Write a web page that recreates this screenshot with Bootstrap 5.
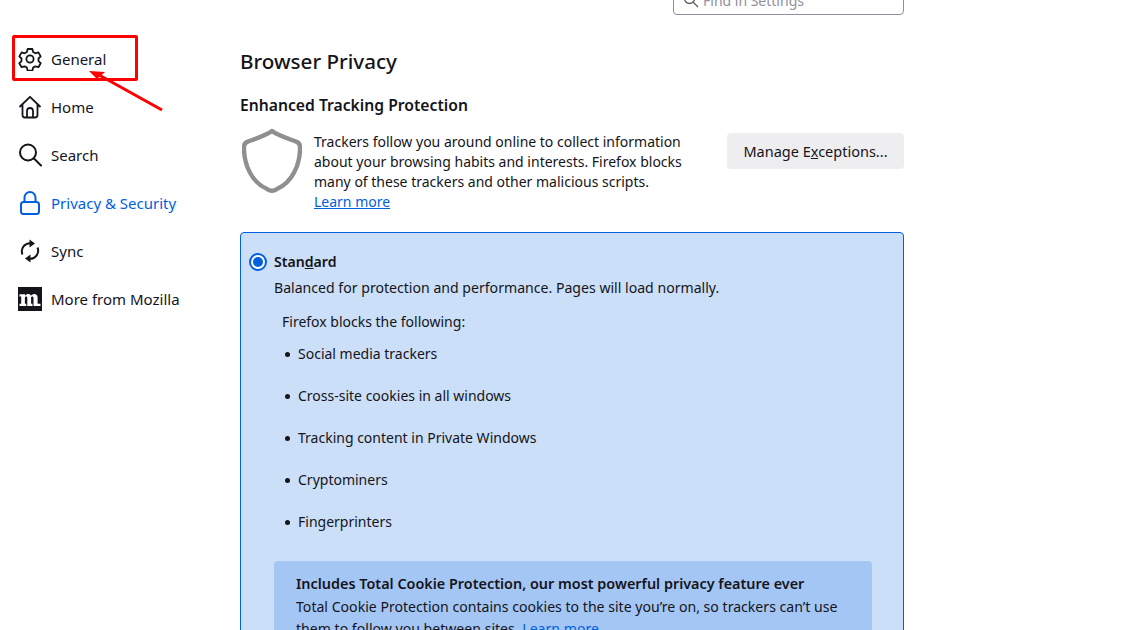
<!DOCTYPE html>
<html lang="en">
<head>
    <meta charset="UTF-8">
    <meta name="viewport" content="width=device-width, initial-scale=1.0">
    <title>Settings</title>
    <link href="https://cdn.jsdelivr.net/npm/bootstrap@5.3.0/dist/css/bootstrap.min.css" rel="stylesheet">
    <style>
        html, body { height: 630px; overflow: hidden; }
        body { font-family: "Noto Sans", "Open Sans", sans-serif; font-size: 14.1px; color: #15141a; background: #fff; position: relative; }
        a { color: #0060df; }
        .page-wrap { height: 630px; }
        .side-col { width: 240px; padding: 35px 0 0 18px; flex: none; }
        .side-item { height: 48px; gap: 9px; font-size: 15px; color: #15141a; }
        .side-item svg { width: 24px; height: 24px; flex: none; }
        .side-item.is-active { color: #0060df; }
        .main-col { width: 664px; flex: none; }
        .find-box { height: 30px; margin-top: -15px; margin-left: 433px; width: 231px; border: 1px solid #8f8f9d; border-radius: 4px; color: #8f8f9d; padding: 0 9px; gap: 4px; font-size: 14px; }
        .page-title { font-size: 20.6px; font-weight: 500; line-height: 30px; margin: 31px 0 0; }
        .sub-title { font-size: 15.7px; font-weight: 600; line-height: 22px; margin: 18px 0 0; }
        .intro-row { margin-top: 16px; height: 88px; }
        .shield-slot { width: 74px; flex: none; padding-left: 2px; margin-top: -4px; }
        .intro-text { width: 400px; line-height: 20px; font-size: 14px; flex: none; }
        .manage-btn { margin: 1px 0 0 auto; width: 177px; height: 36px; background: #eeeef0; border: 0; border-radius: 4px; font-size: 14.5px; color: #15141a; padding: 2px 0 0; }
        .std-card { margin-top: 12px; height: 500px; background: #cbdff8; border: 1px solid #0060df; border-radius: 4px; padding: 18px 31px 0 8px; }
        .radio-dot { width: 18px; height: 18px; border-radius: 50%; background: #fff; border: 2px solid #0060df; flex: none; padding: 2px; }
        .radio-dot span { display: block; width: 10px; height: 10px; border-radius: 50%; background: #0060df; }
        .std-label { font-weight: 600; line-height: 22px; margin-left: -1px; }
        .std-desc { margin: 5px 0 0 25px; line-height: 20px; }
        .blocks-title { margin: 14px 0 0 33px; line-height: 20px; font-size: 14px; }
        .block-list { margin: 11px 0 0 33px; padding: 0; list-style: none; font-size: 14px; }
        .block-list li { height: 42px; line-height: 22px; padding-left: 16px; position: relative; }
        .block-list li::before { content: ""; position: absolute; left: 3px; top: 9px; width: 5px; height: 5px; border-radius: 50%; background: #15141a; }
        .tcp-box { margin: 8px 0 0 25px; background: #a4c6f4; border-radius: 4px; padding: 12px 22px; line-height: 22px; height: 120px; }
        .tcp-box p { margin: 0; }
        .tcp-head { font-weight: 600; font-size: 14.4px; margin-bottom: 1px !important; }
        .note-box { position: absolute; left: 12px; top: 35px; width: 126px; height: 46px; border: 3px solid #f00; border-radius: 2px; }
        .note-arrow { position: absolute; left: 85px; top: 66px; width: 85px; height: 50px; }
    </style>
</head>
<body>
    <div class="page-wrap d-flex">
        <nav class="side-col">
            <div class="side-item d-flex align-items-center">
                <svg viewBox="0 0 24 24" fill="none" stroke="#15141a" stroke-width="1.8" stroke-linejoin="round"><path d="M9.6 2h4.8l.7 3 2.3 1.3 3-.9 2.3 4-2.2 2.1v2.6l2.2 2.1-2.3 4-3-.9-2.3 1.3-.7 3H9.6l-.7-3-2.3-1.3-3 .9-2.3-4 2.2-2.1v-2.6L1.3 9.4l2.3-4 3 .9L8.9 5z"/><circle cx="12" cy="12" r="3.6"/></svg>
                <span>General</span>
            </div>
            <div class="side-item d-flex align-items-center">
                <svg viewBox="0 0 24 24" fill="none" stroke="#15141a" stroke-width="1.8" stroke-linejoin="round"><path d="M1.5 12 12 1.8 22.5 12M4.5 9.5V20a2.5 2.5 0 0 0 2.5 2.5h10a2.5 2.5 0 0 0 2.5-2.5V9.5M9 22.5V16a3 3 0 0 1 6 0v6.5"/></svg>
                <span>Home</span>
            </div>
            <div class="side-item d-flex align-items-center">
                <svg viewBox="0 0 24 24" fill="none" stroke="#15141a" stroke-width="2" stroke-linecap="round"><circle cx="10" cy="9.5" r="8"/><path d="m16 15.500 7 7"/></svg>
                <span>Search</span>
            </div>
            <div class="side-item is-active d-flex align-items-center">
                <svg viewBox="0 0 24 24" fill="none" stroke="#0060df" stroke-width="2" stroke-linejoin="round"><rect x="3" y="11" width="18" height="12" rx="2.500"/><path d="M6.500 11V6.500a5.500 5.500 0 0 1 11 0V11"/></svg>
                <span>Privacy &amp; Security</span>
            </div>
            <div class="side-item d-flex align-items-center">
                <svg viewBox="0 0 24 24" fill="none" stroke="#15141a" stroke-width="2"><path d="M4.500 15.500A8.200 8.200 0 0 1 13 4.200M19.500 8.500a8.200 8.200 0 0 1-8.500 11.300"/><path d="M11.500.5 17 4.500 11.500 8.500zM12.500 15.500l-5.500 4 5.500 4z" fill="#15141a" stroke="none"/></svg>
                <span>Sync</span>
            </div>
            <div class="side-item d-flex align-items-center">
                <svg viewBox="0 0 24 24"><rect width="24" height="24" fill="#15141a"/><path d="M1.500 19V16.800H3.200V9.400H1.500V7.200H7L7.300 8.600C8 7.600 9 7 10.200 7C11.600 7 12.600 7.600 13 8.800C13.800 7.700 14.900 7 16.300 7C18.400 7 19.600 8.300 19.600 10.700V16.800H22.500V19H15.500V11.200C15.500 10.100 15.100 9.500 14.300 9.500C13.800 9.500 13.400 9.700 13.100 10.100V16.800H14.500V19H9.300V11.200C9.300 10.100 8.900 9.500 8.100 9.500C7.600 9.500 7.200 9.700 6.900 10.100V16.800H8.300V19Z" fill="#fff"/></svg>
                <span>More from Mozilla</span>
            </div>
        </nav>
        <main class="main-col">
            <div class="find-box d-flex align-items-center">
                <svg width="16" height="16" viewBox="0 0 16 16" fill="none" stroke="#5b5b66" stroke-width="1.300"><circle cx="6.500" cy="6.500" r="5"/><path d="m10 10 5 5"/></svg>
                <span>Find in Settings</span>
            </div>
            <h1 class="page-title">Browser Privacy</h1>
            <h2 class="sub-title">Enhanced Tracking Protection</h2>
            <div class="intro-row d-flex">
                <div class="shield-slot">
                    <svg width="60" height="66" viewBox="0 0 62 68" fill="none" stroke="#8f8f8f" stroke-width="4.500" stroke-linejoin="round"><path d="M31 3 C36 7 48 11 56 14 C59 15 60 17 60 20 C60 38 52 56 36 63 C33 65 29 65 26 63 C10 56 2 38 2 20 C2 17 3 15 6 14 C14 11 26 7 31 3 Z"/></svg>
                </div>
                <div class="intro-text">Trackers follow you around online to collect information about your browsing habits and interests. Firefox blocks many of these trackers and other malicious scripts.<br><a href="#">Learn more</a></div>
                <button class="manage-btn btn" type="button">Manage E<u>x</u>ceptions...</button>
            </div>
            <section class="std-card">
                <div class="d-flex align-items-center gap-2">
                    <span class="radio-dot"><span></span></span>
                    <span class="std-label">Stan<u>d</u>ard</span>
                </div>
                <p class="std-desc">Balanced for protection and performance. Pages will load normally.</p>
                <div class="blocks-title">Firefox blocks the following:</div>
                <ul class="block-list">
                    <li>Social media trackers</li>
                    <li>Cross-site cookies in all windows</li>
                    <li>Tracking content in Private Windows</li>
                    <li>Cryptominers</li>
                    <li>Fingerprinters</li>
                </ul>
                <div class="tcp-box">
                    <p class="tcp-head">Includes Total Cookie Protection, our most powerful privacy feature ever</p>
                    <p>Total Cookie Protection contains cookies to the site you’re on, so trackers can’t use them to follow you between sites. <a href="#">Learn more</a></p>
                </div>
            </section>
        </main>
    </div>
    <div class="note-box"></div>
    <svg class="note-arrow" viewBox="0 0 85 50"><path d="M77 44 14 9" stroke="#f00" stroke-width="3" fill="none"/><path d="M4 5 20 6 12 13z" fill="#f00"/></svg>
    <script src="https://cdn.jsdelivr.net/npm/bootstrap@5.3.0/dist/js/bootstrap.bundle.min.js"></script>
</body>
</html>
